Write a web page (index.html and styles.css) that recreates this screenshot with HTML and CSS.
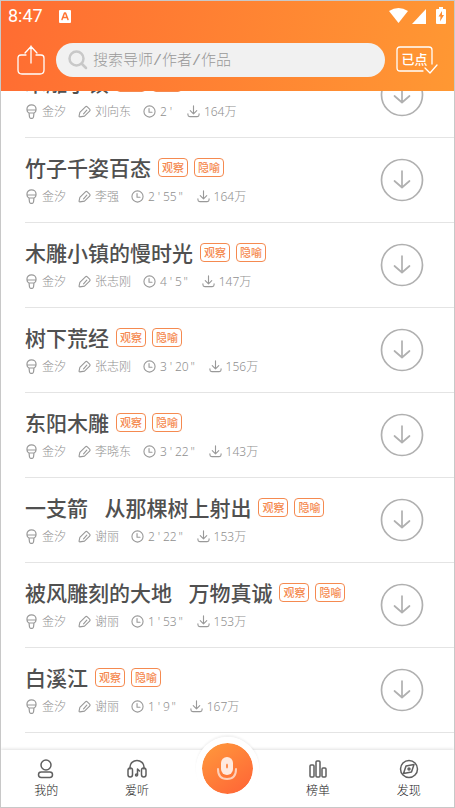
FILE: index.html
```html
<!DOCTYPE html>
<html lang="zh-CN">
<head>
<meta charset="utf-8">
<meta name="viewport" content="width=device-width, initial-scale=1">
<title>朗读</title>
<link rel="stylesheet" href="styles.css">
</head>
<body>
<svg class="sprite" aria-hidden="true">
  <symbol id="mic" viewBox="0 0 13 15"><path d="M2 6V4.800a4.500 4 0 0 1 9 0V6zM2 6q0 2.500 2 3h5q2-.5 2-3M4 9l.5 4q.2 1.300 1.200 1.300h1.600q1 0 1.200-1.300L9 9"/></symbol>
  <symbol id="pen" viewBox="0 0 14 14"><path d="M8 2q1-1 2 0l2.500 2.500q1 1 0 2L7 12l-5 .8q-1 0-.8-1L2 8zM9.500 5.500l-3.500 4"/></symbol>
  <symbol id="clock" viewBox="0 0 14 14"><circle cx="7" cy="7" r="6"/><path d="M6.500 3.800v4h3.200"/></symbol>
  <symbol id="plays" viewBox="0 0 14 14"><path d="M7 1v8.500M3.500 6L7 9.500 10.500 6M1 9.500v1q0 2 2 2h8q2 0 2-2v-1"/></symbol>
  <symbol id="down" viewBox="0 0 44 44"><circle cx="22" cy="22" r="20.500"/><path d="M22 13v16M14.500 23l7.500 6.500 7.500-6.500"/></symbol>
</svg>
<div class="app">
  <header class="top">
    <div class="status">
      <span class="time">8:47</span>
      <svg class="note" viewBox="0 0 12 13"><rect width="12" height="13" rx="1" fill="#fff"/><path d="M3 9.500L5.500 3h1L9 9.500M4 7.500h4" fill="none" stroke="#ff7433" stroke-width="1.500"/></svg>
      <svg class="signals" viewBox="0 0 58 18"><path d="M0 4Q9.500-2 19 4L9.500 16z"/><path d="M37 2v15H23z"/><path d="M50 0h4v2h2q1 0 1 1v13q0 1-1 1h-8q-1 0-1-1V3q0-1 1-1h2z"/><path class="bolt" d="M53 4l-3.500 5.500h2l-.5 5 4-6.500h-2z"/></svg>
    </div>
    <div class="tools">
      <button class="icon-btn" aria-label="分享"><svg class="share" viewBox="0 0 28 30"><path d="M9 10H4q-3 0-3 3v12q0 4 4 4h18q4 0 4-4V13q0-3-3-3h-5M14 18V1M8 8l6-6.500L20 8"/></svg></button>
      <label class="search">
        <svg class="lens" viewBox="0 0 20 20"><circle cx="8.500" cy="8.500" r="7"/><path d="M14 14l4 4"/></svg>
        <input type="search" placeholder="搜索导师/作者/作品" aria-label="搜索">
      </label>
      <button class="icon-btn picked"><svg viewBox="0 0 42 28"><path d="M27 25H4q-3 0-3-3V4q0-3 3-3h29q3 0 3 3v14M29 22l5 5 7-8"/></svg><span>已点</span></button>
    </div>
  </header>
  <main class="scroll"><ul class="list" id="list"></ul></main>
  <nav class="tabs">
    <a href="#me"><svg viewBox="0 0 20 20"><circle cx="10" cy="6" r="5"/><rect x="2.500" y="13" width="14" height="5.500" rx="2.700"/></svg>我的</a>
    <a href="#listen"><svg viewBox="0 0 20 20"><path d="M3 10V8a7 6.500 0 0 1 14 0v2"/><rect x="1" y="9" width="4.500" height="9" rx="2.200"/><rect x="14.500" y="9" width="4.500" height="9" rx="2.200"/><path d="M10.500 16v-6l2 2"/><circle cx="9.500" cy="16" r="1"/></svg>爱听</a>
    <a href="#record" class="record" aria-label="朗读"><span class="disc"><svg class="voice" viewBox="0 0 22 26"><rect class="head" x="5" y="1" width="12" height="18" rx="6"/><path class="stand" d="M2 13q0 10 9 10t9-10"/><ellipse class="slot" cx="11" cy="10" rx="1" ry="2.500"/></svg></span></a>
    <a href="#rank"><svg viewBox="0 0 20 20"><rect x="2" y="6" width="4" height="12" rx="1"/><rect x="8" y="2" width="4" height="16" rx="1"/><rect x="14" y="9" width="4" height="9" rx="1"/></svg>榜单</a>
    <a href="#find"><svg viewBox="0 0 20 20"><circle cx="10" cy="10" r="8.500"/><path d="M7 7l8-1.500-2.500 7.500-8 1.500z"/><circle cx="10" cy="10" r="1"/></svg>发现</a>
  </nav>
</div>
<script src="list.js"></script>
</body>
</html>
```
FILE: styles.css
```css
* { box-sizing: border-box; }
body {
  margin: 0;
  font-family: "Noto Sans", "Noto Sans CJK SC", sans-serif;
  background: #fff;
}
svg { display: block; fill: none; stroke-linecap: round; stroke-linejoin: round; }
.sprite { display: none; }
button { padding: 0; border: 0; background: none; font: inherit; color: inherit; }
a { color: inherit; text-decoration: none; }

.app {
  height: 100vh;
  display: flex;
  flex-direction: column;
  border: 1px solid #c8c8c8;
  overflow: hidden;
}

.top {
  position: relative;
  z-index: 1;
  flex: none;
  height: 90px;
  color: #fff;
  background: linear-gradient(100deg, #ff6c32, #ff9833);
}
.status {
  display: flex;
  align-items: center;
  height: 30px;
  padding: 0 7px;
}
.time { font: 400 18px/24px Roboto, sans-serif; }
.note { width: 12px; height: 13px; margin-left: 16px; }
.signals { width: 58px; height: 18px; margin-left: auto; fill: #fff; }
.signals .bolt { fill: #ff8d32; }
.tools {
  display: flex;
  align-items: center;
  gap: 11px;
  padding: 12px 16px 0;
}
.icon-btn svg { stroke: #fff; stroke-width: 1.3; }
.share { width: 28px; height: 30px; }
.search {
  flex: 1;
  min-width: 0;
  height: 34px;
  display: flex;
  align-items: center;
  gap: 5px;
  padding: 0 12px;
  border-radius: 17px;
  background: #f1f1f1;
}
.lens { flex: none; width: 20px; height: 20px; stroke: #c8c8c8; stroke-width: 2.5; }
.search input {
  flex: 1;
  min-width: 0;
  padding: 4px 0 0;
  border: 0;
  outline: 0;
  background: none;
  font: 300 15px/24px "Liberation Mono", "Noto Sans CJK SC", sans-serif;
}
.search input::placeholder { color: #999; opacity: 1; }
.picked { display: grid; width: 42px; height: 28px; }
.picked > * { grid-area: 1 / 1; }
.picked span { width: 37px; font-size: 13px; font-weight: 500; line-height: 26px; text-align: center; }

.scroll { flex: 1; min-height: 0; overflow: hidden; }
.list { list-style: none; margin: -38px 0 0; padding: 0 0 0 24px; }
.row {
  height: 85px;
  display: flex;
  align-items: center;
  padding-right: 30px;
  border-bottom: 1px solid #e4e4e4;
}
.info { flex: 1; min-width: 0; }
.head { display: flex; align-items: center; gap: 6px; }
.title {
  margin: 0 1px 0 0;
  font-size: 21px;
  font-weight: 500;
  line-height: 32px;
  color: #505050;
  white-space: pre;
}
.tag {
  padding: 0 3px;
  border: 1px solid #f58a50;
  border-radius: 4px;
  font-size: 11px;
  font-weight: 500;
  line-height: 17px;
  color: #f58a50;
}
.meta {
  display: flex;
  gap: 12px;
  margin-top: 1px;
  font-size: 12px;
  font-weight: 300;
  line-height: 24px;
  color: #909090;
}
.meta span { display: flex; align-items: center; gap: 4px; }
.meta svg { width: 13px; height: 15px; stroke: #999; stroke-width: 1.2; }
.meta time { display: flex; }
.meta i { width: 8px; font-style: normal; text-align: center; }
.get svg { width: 44px; height: 44px; stroke: #b0b0b0; stroke-width: 1.7; }

.tabs {
  position: relative;
  flex: none;
  height: 57px;
  display: grid;
  grid-template-columns: repeat(5, 1fr);
  background: #fff;
  box-shadow: 0 -1px 3px rgba(0, 0, 0, .12);
}
.tabs a {
  display: flex;
  flex-direction: column;
  align-items: center;
  padding-top: 9px;
  font-size: 12px;
  font-weight: 300;
  line-height: 24px;
  color: #222;
}
.tabs svg { width: 20px; height: 20px; stroke: #606060; stroke-width: 1.5; }
.tabs .record { padding: 0; }
.disc {
  display: grid;
  place-items: center;
  width: 63px;
  height: 63px;
  margin-top: -13px;
  border: 6px solid #fff;
  border-radius: 50%;
  background: linear-gradient(145deg, #ff9a3c, #ff6236) padding-box;
  box-shadow: 0 -2px 2px rgba(0, 0, 0, .05);
}
.tabs .voice { width: 22px; height: 26px; stroke: none; }
.voice .head { fill: #ffe9df; }
.tabs .voice .stand { stroke: #ffd0ba; stroke-width: 2; }
.voice .slot { fill: #ff8745; }
```
FILE: list.js
```js
const readings = [
  ["木雕小镇", "刘向东", "2'", "164万"],
  ["竹子千姿百态", "李强", "2'55\"", "164万"],
  ["木雕小镇的慢时光", "张志刚", "4'5\"", "147万"],
  ["树下荒经", "张志刚", "3'20\"", "156万"],
  ["东阳木雕", "李晓东", "3'22\"", "143万"],
  ["一支箭   从那棵树上射出", "谢丽", "2'22\"", "153万"],
  ["被风雕刻的大地   万物真诚", "谢丽", "1'53\"", "153万"],
  ["白溪江", "谢丽", "1'9\"", "167万"]
];
const icon = id => `<svg aria-hidden="true"><use href="#${id}"/></svg>`;
document.getElementById("list").innerHTML = readings.map(([title, author, length, plays]) => `
  <li class="row">
    <div class="info">
      <div class="head"><h2 class="title">${title}</h2><span class="tag">观察</span><span class="tag">隐喻</span></div>
      <div class="meta">
        <span>${icon("mic")}金汐</span><span>${icon("pen")}${author}</span>
        <span>${icon("clock")}<time>${length.replace(/['"]/g, m => `<i>${m}</i>`)}</time></span><span>${icon("plays")}${plays}</span>
      </div>
    </div>
    <button class="get" aria-label="下载">${icon("down")}</button>
  </li>`).join("");
```
